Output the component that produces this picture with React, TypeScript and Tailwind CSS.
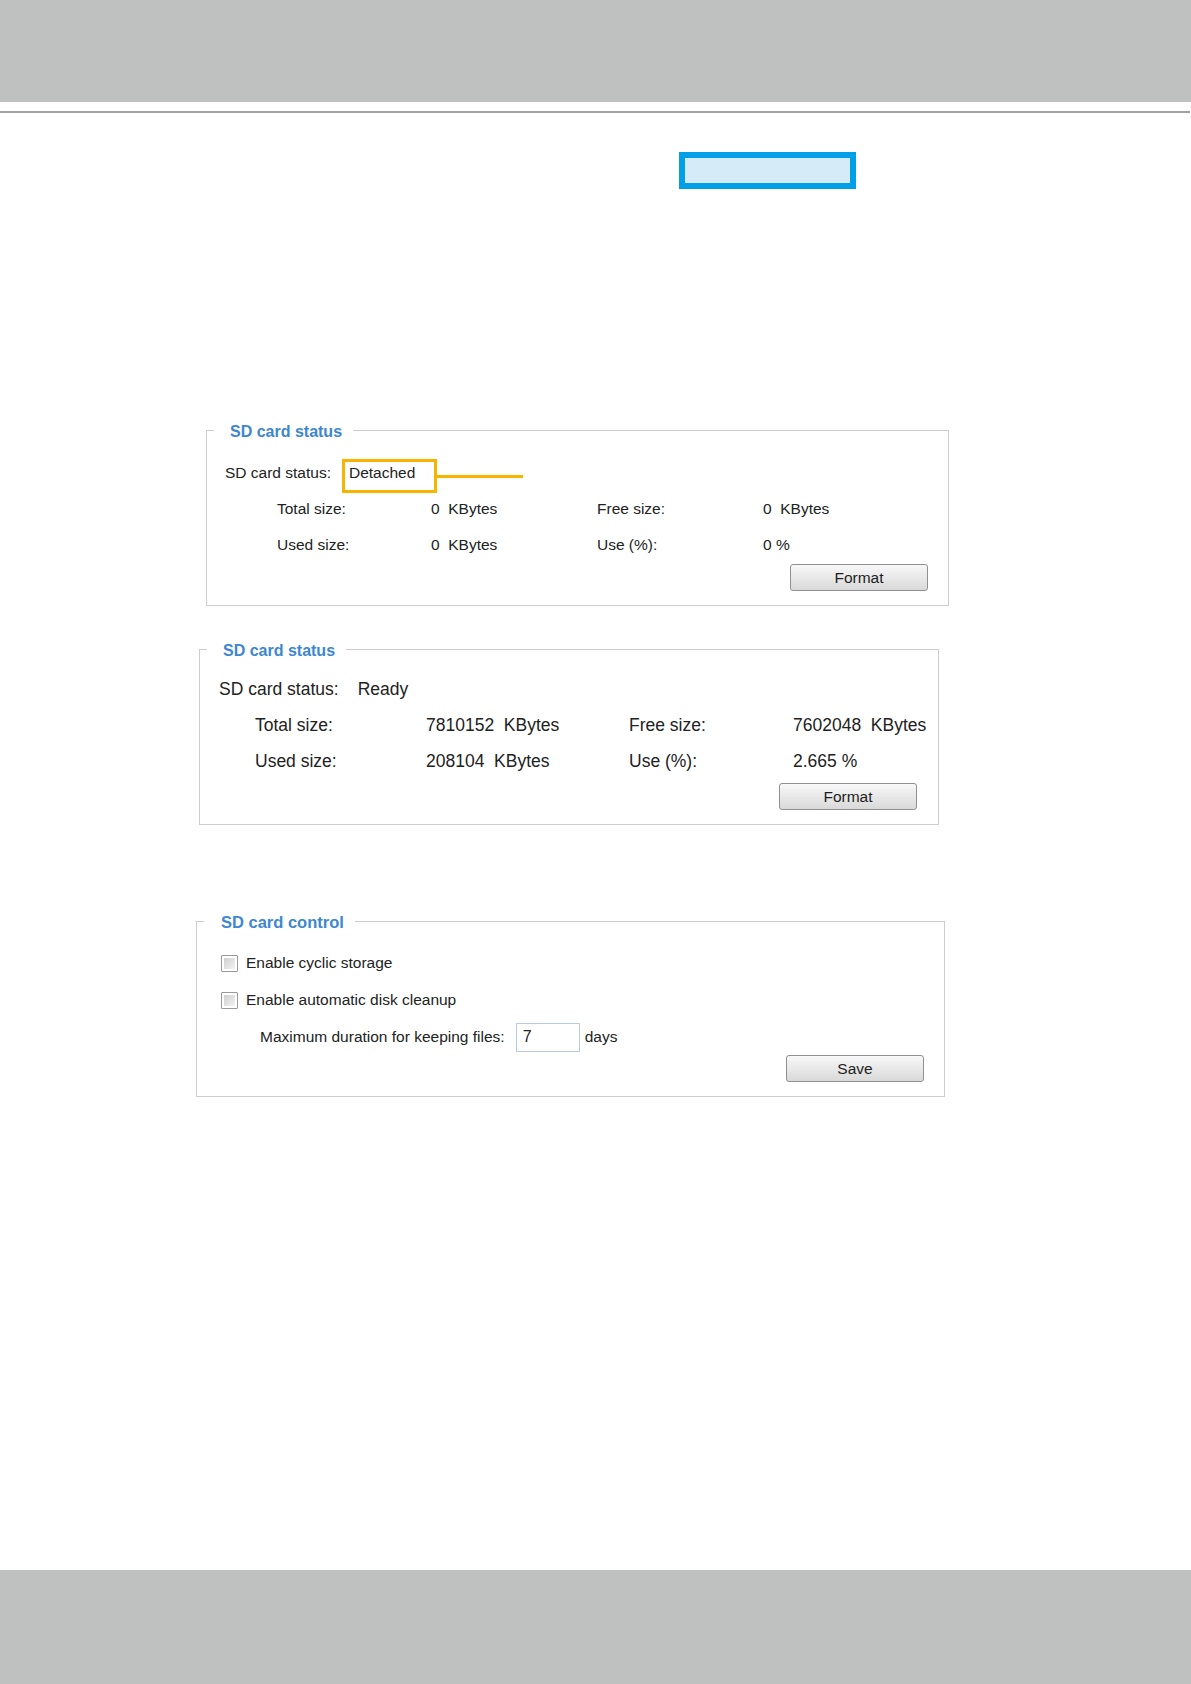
import React from "react";

const font = { fontFamily: '"Liberation Sans", Arial, sans-serif' };

function Btn({ label }: { label: string }) {
  return (
    <button className="w-[138px] h-[27px] rounded-[3px] border border-[#8f9090] bg-gradient-to-b from-[#f8f8f8] to-[#d9d9d9] text-[15.5px] leading-none text-[#1e1e1e]">
      {label}
    </button>
  );
}

function Check() {
  return (
    <span className="inline-block w-[17px] h-[17px] border border-[#9a9a9a] rounded-[1px] bg-white p-[2px]">
      <span className="block w-full h-full bg-gradient-to-br from-[#cfcfcf] to-[#f3f3f3]" />
    </span>
  );
}

export default function App() {
  return (
    <div className="w-[1191px] h-[1684px] flex flex-col bg-white text-[#222]" style={font}>
      <div className="h-[102px] bg-[#bfc1c0]" />
      <div className="mt-[9px] h-[2px] w-[1190px] bg-[#a2a2a2]" />
      <div className="flex-1">
        <div className="mt-[39px] ml-[679px] w-[177px] h-[37px] border-[6px] border-[#00a0e9] bg-[#d5ebf8]" />

        {/* Panel 1 */}
        <fieldset className="mt-[231px] ml-[206px] w-[743px] border border-[#cdcdcd] pb-[14px] text-[15.5px]">
          <legend className="ml-[7px] pl-[16px] pr-[11px] h-[20px] leading-[23px] text-[16px] font-bold text-[#3d87cf]">
            SD card status
          </legend>
          <div className="relative mt-[15px] h-[36px] flex items-center pl-[18px]">
            <span>SD card status:</span>
            <span className="ml-[18px]">Detached</span>
            <div className="absolute left-[135px] top-[4px] w-[95px] h-[34px] border-[3.5px] border-[#f7b500]" />
            <div className="absolute left-[230px] top-[20px] w-[86px] h-[3px] bg-[#f7b500]" />
          </div>
          <div className="grid grid-cols-[154px_166px_166px_auto] pl-[70px]">
            <div className="h-[36px] flex items-center">Total size:</div>
            <div className="h-[36px] flex items-center whitespace-pre">0  KBytes</div>
            <div className="h-[36px] flex items-center">Free size:</div>
            <div className="h-[36px] flex items-center whitespace-pre">0  KBytes</div>
            <div className="h-[36px] flex items-center">Used size:</div>
            <div className="h-[36px] flex items-center whitespace-pre">0  KBytes</div>
            <div className="h-[36px] flex items-center">Use (%):</div>
            <div className="h-[36px] flex items-center">0 %</div>
          </div>
          <div className="mt-[1px] flex justify-end pr-[20px]">
            <Btn label="Format" />
          </div>
        </fieldset>

        {/* Panel 2 */}
        <fieldset className="mt-[33px] ml-[199px] w-[740px] border border-[#cdcdcd] pb-[14px] text-[17.5px]">
          <legend className="ml-[7px] pl-[16px] pr-[11px] h-[20px] leading-[23px] text-[16px] font-bold text-[#3d87cf]">
            SD card status
          </legend>
          <div className="mt-[12px] h-[36px] flex items-center pl-[19px]">
            <span>SD card status:</span>
            <span className="ml-[19px]">Ready</span>
          </div>
          <div className="grid grid-cols-[171px_203px_164px_auto] pl-[55px]">
            <div className="h-[36px] flex items-center">Total size:</div>
            <div className="h-[36px] flex items-center whitespace-pre">7810152  KBytes</div>
            <div className="h-[36px] flex items-center">Free size:</div>
            <div className="h-[36px] flex items-center whitespace-pre">7602048  KBytes</div>
            <div className="h-[36px] flex items-center">Used size:</div>
            <div className="h-[36px] flex items-center whitespace-pre">208104  KBytes</div>
            <div className="h-[36px] flex items-center">Use (%):</div>
            <div className="h-[36px] flex items-center">2.665 %</div>
          </div>
          <div className="mt-[4px] flex justify-end pr-[21px]">
            <Btn label="Format" />
          </div>
        </fieldset>

        {/* Panel 3 */}
        <fieldset className="mt-[86px] ml-[196px] w-[749px] border border-[#cdcdcd] pb-[14px] text-[15.5px]">
          <legend className="ml-[7px] pl-[17px] pr-[11px] h-[20px] leading-[23px] text-[16.5px] font-bold text-[#3d87cf]">
            SD card control
          </legend>
          <div className="mt-[14px] h-[36px] flex items-center pl-[24px] gap-[8px]">
            <Check />
            <span>Enable cyclic storage</span>
          </div>
          <div className="mt-[1px] h-[36px] flex items-center pl-[24px] gap-[8px]">
            <Check />
            <span>Enable automatic disk cleanup</span>
          </div>
          <div className="mt-[1px] h-[36px] flex items-center pl-[63px]">
            <span>Maximum duration for keeping files:</span>
            <div className="ml-[11px] w-[64px] h-[29px] border border-[#b8cbe0] bg-white flex items-center pl-[6px] text-[16px]">
              7
            </div>
            <span className="ml-[5px]">days</span>
          </div>
          <div className="flex justify-end pr-[20px]">
            <Btn label="Save" />
          </div>
        </fieldset>
      </div>
      <div className="h-[114px] bg-[#bfc1c0]" />
    </div>
  );
}
